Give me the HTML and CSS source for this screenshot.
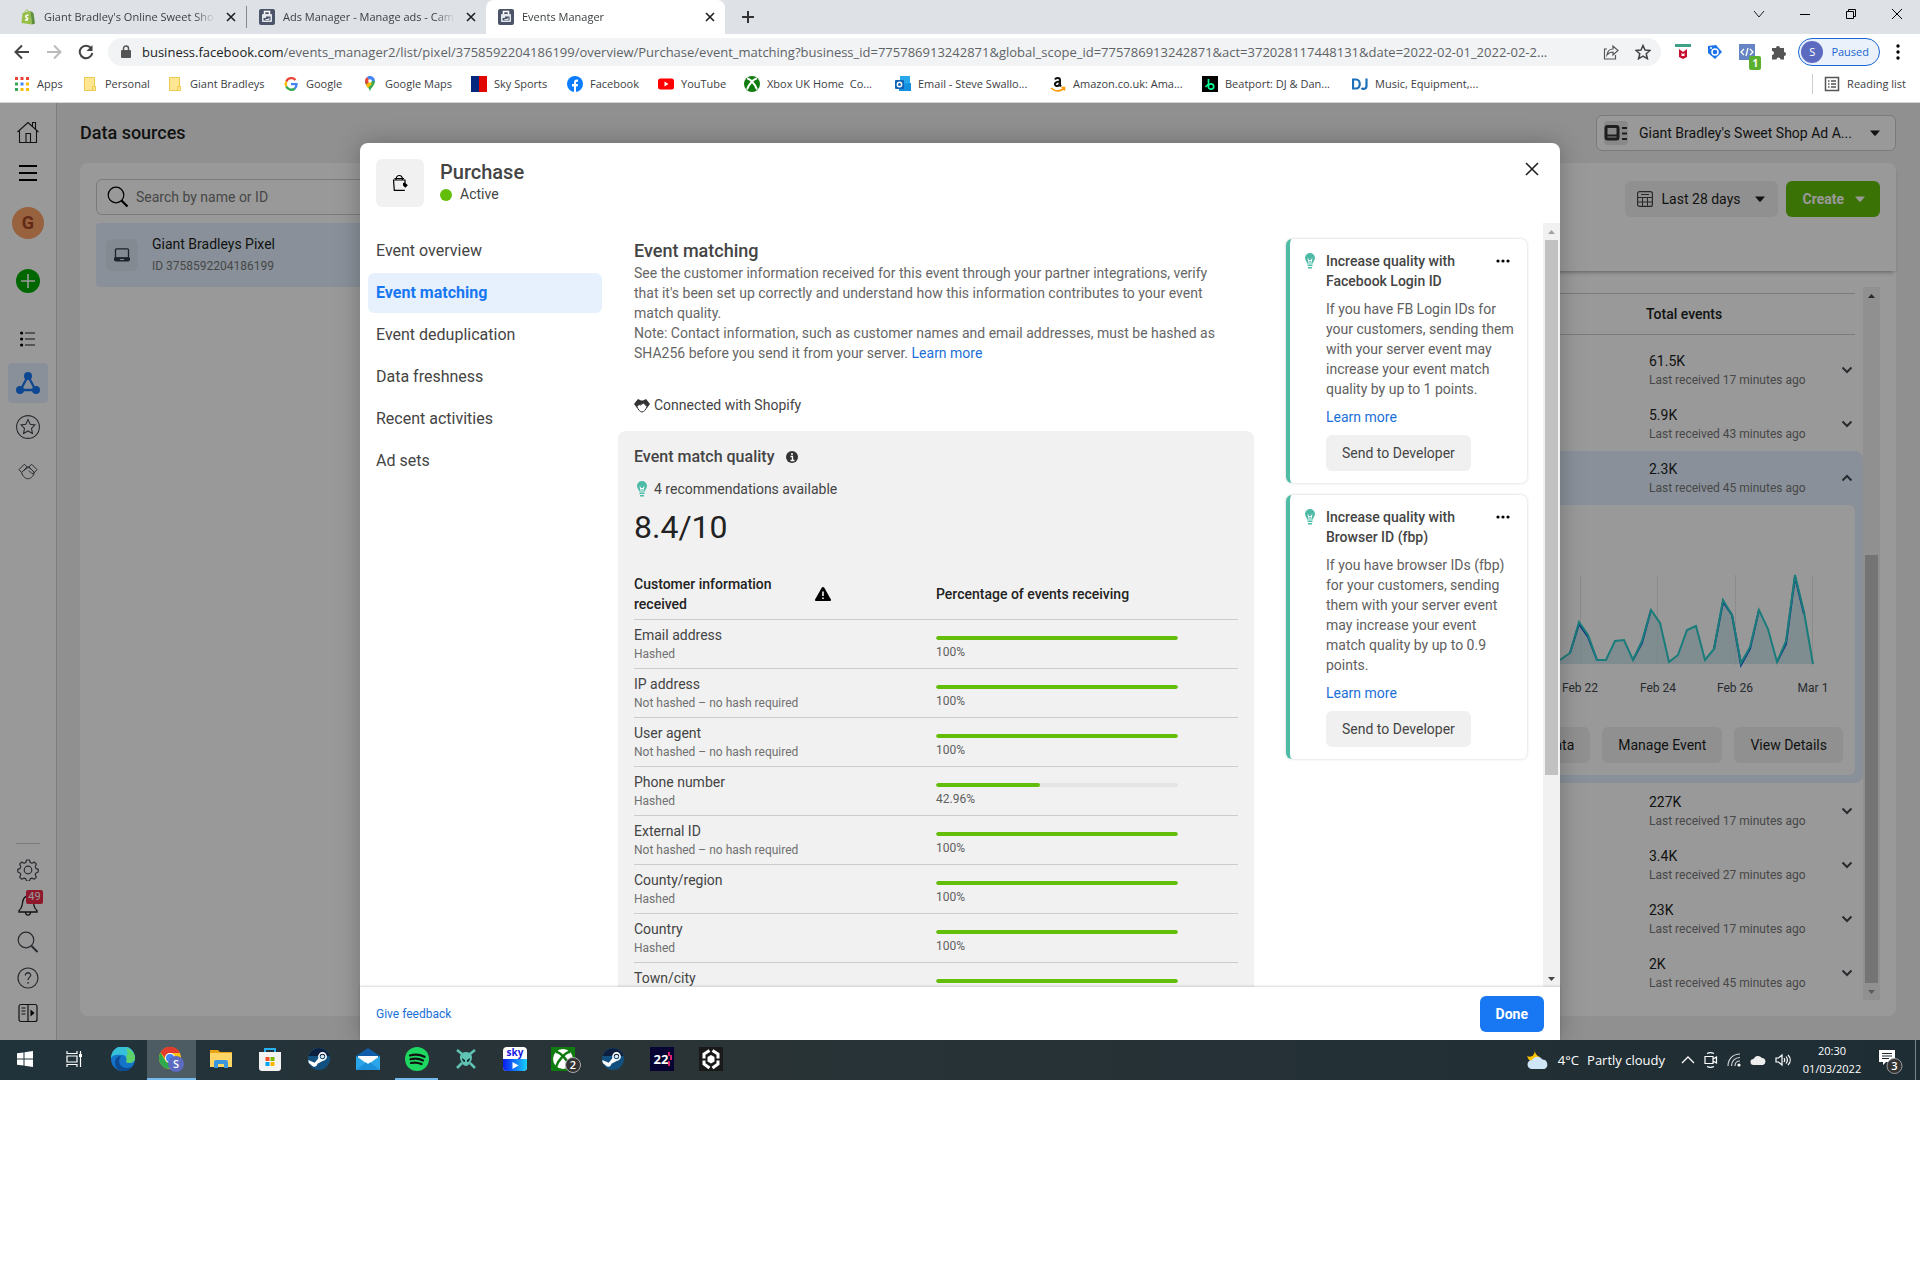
FILE: index.html
```html
<!DOCTYPE html>
<html lang="en">
<head>
    <meta charset="UTF-8">
    <meta name="viewport" content="width=device-width, initial-scale=1.0">
    <title>Events Manager</title>
    <link rel="stylesheet" href="styles.css">
</head>
<body>
    <!-- shared icons -->
    <svg class="sprite" aria-hidden="true">
        <symbol id="i-x" viewBox="0 0 12 12"><path d="M2 2l8 8M10 2l-8 8" stroke="currentColor" stroke-width="1.6" fill="none"/></symbol>
        <symbol id="i-folder" viewBox="0 0 16 16"><path d="M2.5 1.5h10v13h-10z" fill="#ffe693" stroke="#edc94d"/><path d="M10.500 10.500h3v4h-3z" fill="#ffe693" stroke="#edc94d"/></symbol>
        <symbol id="i-case" viewBox="0 0 16 16"><rect width="16" height="16" rx="2" fill="#4b5468"/><path d="M5.500 5V2.500h5V5" fill="none" stroke="#fff" stroke-width="1.500"/><rect x="3" y="5" width="10" height="8" rx="1" fill="#e4e7ec"/><path d="M4.500 11.500V9h2.500V7.500h4.500v4z" fill="#4b5468"/><path d="M6.500 10.500h3.500V8.800" fill="none" stroke="#e4e7ec"/></symbol>
        <symbol id="i-caret" viewBox="0 0 12 8"><path d="M1 1.500h10L6.700 6.500a1 1 0 0 1-1.400 0z" fill="currentColor"/></symbol>
        <symbol id="i-down" viewBox="0 0 12 8"><path d="M1.500 1.500L6 6l4.500-4.500" fill="none" stroke="currentColor" stroke-width="2"/></symbol>
        <symbol id="i-bulb" viewBox="0 0 16 16"><path d="M8 0a5 5 0 0 0-5 5c0 2 1.400 3 2.200 5.500h5.600C11.600 8 13 7 13 5a5 5 0 0 0-5-5z" fill="#4dbba6"/><path d="M6 5.500l1.200 4.500M10 5.500L8.800 10M7 7l1 1 1-1" stroke="#fff" fill="none"/><path d="M5.500 12.300h5M6 14.800h4" stroke="#4dbba6" stroke-width="1.400"/></symbol>
        <symbol id="i-shake" viewBox="0 0 22 18"><path d="M1 7l6-6 3 3-6 6zM21 7l-6-6-3 3 6 6zM10 4h3M4 10c1 5 5 7 7 7s6-2 7-7M7 8c2-3 5-4 7-2l3 3c1 2-1 3-2 2l-3-3" fill="none" stroke="currentColor" stroke-width="1.100" stroke-linejoin="round"/></symbol>
        <symbol id="i-dots" viewBox="0 0 14 4"><circle cx="2" cy="2" r="1.600"/><circle cx="7" cy="2" r="1.600"/><circle cx="12" cy="2" r="1.600"/></symbol>
        <symbol id="i-steam" viewBox="0 0 24 24"><circle cx="12" cy="12" r="11" fill="#12507f"/><path d="M1.500 9A11 11 0 0 1 22.500 9z" fill="#0d1f3f"/><circle cx="15.500" cy="9.500" r="3.600" fill="none" stroke="#fff" stroke-width="1.600"/><circle cx="15.500" cy="9.500" r="1.800" fill="#dfe7ee"/><path d="M1.200 13l6.500 2.800 4.300-5.300 4 3.300-5.500 3a3.300 3.300 0 0 1-6 1.500L1.800 16z" fill="#fff"/></symbol>
    </svg>

    <div class="screen">
        <!-- browser window -->
        <header class="browser">
            <div class="tab-strip">
                <div class="tab">
                    <svg class="tab-icon" viewBox="0 0 16 16"><path d="M2.500 4l8-2 1.500 13.500-10.500-1.500z" fill="#95bf47"/><path d="M10.500 2l3 2L15 14.500 12 15.500z" fill="#5e8e3e"/><path d="M5 4c0-4 4-4 4 0" fill="none" stroke="#95bf47"/><path d="M8.500 6.500C6 5.500 5 8 6.800 8.800 8.500 9.600 7.500 11.800 5 10.800" fill="none" stroke="#fff" stroke-width="1.500"/></svg>
                    <a href="#" class="tab-title">Giant Bradley's Online Sweet Shop</a>
                    <button class="tab-close" aria-label="Close tab"><svg width="12" height="12"><use href="#i-x"/></svg></button>
                </div>
                <div class="tab">
                    <svg class="tab-icon"><use href="#i-case"/></svg>
                    <a href="#" class="tab-title">Ads Manager - Manage ads - Campaigns</a>
                    <button class="tab-close" aria-label="Close tab"><svg width="12" height="12"><use href="#i-x"/></svg></button>
                </div>
                <div class="tab tab-active">
                    <svg class="tab-icon"><use href="#i-case"/></svg>
                    <a href="#" class="tab-title">Events Manager</a>
                    <button class="tab-close" aria-label="Close tab"><svg width="12" height="12"><use href="#i-x"/></svg></button>
                </div>
                <button class="new-tab" aria-label="New tab"><svg width="14" height="14"><path d="M7 1v12M1 7h12" stroke="#333" stroke-width="2"/></svg></button>
                <div class="window-buttons">
                    <button aria-label="Search tabs"><svg width="12" height="12"><path d="M1 3l5 6 5-6" fill="none" stroke="#222"/></svg></button>
                    <button aria-label="Minimise"><svg width="12" height="12"><path d="M1 6.500h10" stroke="#000"/></svg></button>
                    <button aria-label="Restore"><svg width="12" height="12"><path d="M1.500 3.500h7v7h-7zM3.500 3.500v-2h7v7h-2" fill="none" stroke="#000"/></svg></button>
                    <button aria-label="Close"><svg width="12" height="12"><path d="M1 1l10 10M11 1L1 11" stroke="#000"/></svg></button>
                </div>
            </div>

            <div class="toolbar">
                <button class="nav-button" aria-label="Back"><svg width="16" height="16"><path d="M15 8H2M8 1.500L1.500 8 8 14.500" fill="none" stroke="#444" stroke-width="2"/></svg></button>
                <button class="nav-button" aria-label="Forward"><svg width="16" height="16"><path d="M1 8h13M8 1.500L14.500 8 8 14.500" fill="none" stroke="#bbb" stroke-width="2"/></svg></button>
                <button class="nav-button" aria-label="Reload"><svg width="16" height="16"><path d="M13 4a6.300 6.300 0 1 0 1.300 5" fill="none" stroke="#444" stroke-width="2"/><path d="M14.500 1v6h-6z" fill="#444"/></svg></button>
                <div class="address">
                    <svg width="10" height="14"><rect y="5" width="10" height="8" rx="1" fill="#555"/><path d="M2.500 6V3.500a2.500 2.500 0 0 1 5 0V6" fill="none" stroke="#555" stroke-width="1.500"/></svg>
                    <label for="url">business.facebook.com</label>
                    <input type="text" id="url" value="/events_manager2/list/pixel/3758592204186199/overview/Purchase/event_matching?business_id=775786913242871&amp;global_scope_id=775786913242871&amp;act=372028117448131&amp;date=2022-02-01_2022-02-2...">
                    <button aria-label="Share"><svg width="16" height="16"><path d="M4 5H1.500v10h11v-4M4 11c.5-4 3-6 6-6V2l5 4.500-5 4.500V8c-3 0-4.500 1-6 3z" fill="none" stroke="#555" stroke-width="1.200"/></svg></button>
                    <button aria-label="Bookmark"><svg width="16" height="16"><path d="M8 1.500l2 4.600 5 .4-3.800 3.300 1.200 4.900L8 12.100l-4.400 2.600 1.200-4.900L1 6.500l5-.4z" fill="none" stroke="#444" stroke-width="1.500"/></svg></button>
                </div>
                <div class="extensions">
                    <svg width="16" height="16"><path d="M0 0h16v3H0z" fill="#3fa288"/><path d="M4 5l4 3 4-3v8l-4 2-4-2z" fill="#c8102e"/><path d="M6.500 9L8 10l1.500-1v3h-3z" fill="#fff"/></svg>
                    <svg width="16" height="16"><path d="M1 2l8-1 6 7-7 7-7-6z" fill="#1a73e8"/><circle cx="8" cy="8" r="3" fill="none" stroke="#fff" stroke-width="1.500"/><circle cx="4" cy="4" r="1" fill="#fff"/></svg>
                    <span class="ext-code"><svg width="16" height="16"><rect width="16" height="16" fill="#6584c3"/><path d="M5 5L2 8l3 3M11 5l3 3-3 3M9 4l-2 8" fill="none" stroke="#fff" stroke-width="1.300"/></svg><span class="ext-badge">1</span></span>
                    <svg width="16" height="16"><path d="M1 4h4a2 2 0 1 1 4 0h4v4a2 2 0 1 1 0 4v3.500H9.500a2 2 0 1 0-4 0H1V11a2 2 0 1 0 0-4z" fill="#555"/></svg>
                </div>
                <button class="profile"><span>S</span>Paused</button>
                <button class="kebab" aria-label="Menu"><svg width="4" height="16"><circle cx="2" cy="2" r="1.700"/><circle cx="2" cy="8" r="1.700"/><circle cx="2" cy="14" r="1.700"/></svg></button>
            </div>

            <nav class="bookmarks">
                <a href="#"><svg viewBox="0 0 16 16"><path d="M1 1h3v3H1zM6.500 1h3v3h-3zM12 1h3v3h-3z" fill="#ea4335"/><path d="M1 6.500h3v3H1zM1 12h3v3H1z" fill="#34a853"/><path d="M6.500 6.500h3v3h-3z" fill="#4285f4"/><path d="M12 6.500h3v3h-3zM6.500 12h3v3h-3zM12 12h3v3h-3z" fill="#fbbc04"/></svg>Apps</a>
                <a href="#"><svg><use href="#i-folder"/></svg>Personal</a>
                <a href="#"><svg><use href="#i-folder"/></svg>Giant Bradleys</a>
                <a href="#"><svg viewBox="0 0 16 16"><path d="M12.500 4A5.500 5.500 0 0 0 3.300 5.500" fill="none" stroke="#ea4335" stroke-width="2.300"/><path d="M3.300 5.500a5.500 5.500 0 0 0 0 5" fill="none" stroke="#fbbc04" stroke-width="2.300"/><path d="M3.300 10.500a5.500 5.500 0 0 0 8.500 2" fill="none" stroke="#34a853" stroke-width="2.300"/><path d="M11.800 12.500c1.300-1 1.700-2.500 1.700-4.300H8" fill="none" stroke="#4285f4" stroke-width="2.300"/></svg>Google</a>
                <a href="#"><svg viewBox="0 0 16 16"><path d="M8 16C8 12 3 10 3 5l4-1 6 1c0 5-5 7-5 11z" fill="#34a853"/><path d="M3 5a5 5 0 0 1 2-4l3 4-4 4z" fill="#ea4335"/><path d="M5 1a5 5 0 0 1 8 4L8 5z" fill="#4285f4"/><path d="M4 9l4-4 2 3-4 4z" fill="#fbbc04"/><circle cx="8" cy="5" r="1.800" fill="#fff"/></svg>Google Maps</a>
                <a href="#"><svg viewBox="0 0 16 16"><path d="M0 0h8v16H0z" fill="#00277e"/><path d="M8 0h8v16H8z" fill="#e10600"/></svg>Sky Sports</a>
                <a href="#"><svg viewBox="0 0 16 16"><circle cx="8" cy="8" r="8" fill="#0a7cff"/><path d="M7 16v-5.500H5V8h2V6.500C7 4.300 8.300 3.300 11 3.700v2c-1.400 0-2 .1-2 1V8h2l-.4 2.500H9V16z" fill="#fff"/></svg>Facebook</a>
                <a href="#"><svg viewBox="0 0 16 16"><rect y="2.500" width="16" height="11" rx="2.500" fill="#f00"/><path d="M6.500 5.500l4 2.500-4 2.500z" fill="#fff"/></svg>YouTube</a>
                <a href="#"><svg viewBox="0 0 16 16"><circle cx="8" cy="8" r="8" fill="#107c10"/><path d="M3 2.500C5.500 2.500 11.500 8 13 13.500M13 2.500C10.500 2.500 4.500 8 3 13.500" fill="none" stroke="#fff" stroke-width="2"/></svg>Xbox UK Home&nbsp; Co...</a>
                <a href="#"><svg viewBox="0 0 16 16"><path d="M5 0h10v10H5z" fill="#28a8ea"/><path d="M4 8l12-1v8H4z" fill="#1490df"/><rect y="4" width="9" height="9" rx="1" fill="#0f64b5"/><circle cx="4.500" cy="8.500" r="2.200" fill="none" stroke="#fff" stroke-width="1.400"/></svg>Email - Steve Swallo...</a>
                <a href="#"><svg viewBox="0 0 16 16"><path d="M5 3.500c1-2 5-2 5 .5v5l1 1.500M10 5.500c-6 0-6 4-3.500 4.500S10 8 10 5.500" fill="none" stroke="#111" stroke-width="2"/><path d="M1 12c4 3.500 9 3.500 13 .5M11.500 11.500h3v3" fill="none" stroke="#f90" stroke-width="1.600"/></svg>Amazon.co.uk: Ama...</a>
                <a href="#"><svg viewBox="0 0 16 16"><path d="M0 0h16v16H0z" fill="#000"/><circle cx="9" cy="10.500" r="2.700" fill="none" stroke="#01ff95" stroke-width="1.700"/><path d="M6.500 3v5L3.500 11" fill="none" stroke="#01ff95" stroke-width="1.700"/></svg>Beatport: DJ &amp; Dan...</a>
                <a href="#"><svg viewBox="0 0 16 16"><path d="M1 3.500h3c5 0 5 9 0 9H1zM14.500 2.500V10c0 3-3.500 3.500-5 2" fill="none" stroke="#1d6fb8" stroke-width="2.200"/></svg>Music, Equipment,...</a>
                <a href="#" class="reading-list"><svg viewBox="0 0 16 16"><path d="M1.500 1.500h13v13h-13zM4 5h1.500M7 5h5M4 8h1.500M7 8h5M4 11h1.500M7 11h5" fill="none" stroke="#555" stroke-width="1.500"/></svg>Reading list</a>
            </nav>
        </header>

        <div class="app">
            <aside class="sidebar">
                <a href="#" aria-label="Home"><svg width="22" height="22"><path d="M.5 11L11 1.500 21.500 11M2.500 9.500v12h17v-12M15.500 5V1.500h3V8M9 21v-8.500h4.500V21" fill="none" stroke="#1c1e21" stroke-width="1.100"/></svg></a>
                <a href="#" aria-label="Menu"><svg width="18" height="18"><path d="M0 2h18M0 9h18M0 16h18" stroke="#000" stroke-width="2"/></svg></a>
                <a href="#" class="avatar">G</a>
                <a href="#" class="add" aria-label="Add"><svg width="24" height="24"><circle cx="12" cy="12" r="12" fill="#00ab00"/><path d="M12 5v14M5 12h14" stroke="#fff" stroke-width="1.600"/></svg></a>
                <a href="#" class="side-link" aria-label="Overview"><svg width="16" height="16"><path d="M5 2h10M5 8h10M5 14h10" stroke="#1c1e21"/><circle cx="1.600" cy="2" r="1.600"/><circle cx="1.600" cy="8" r="1.600"/><circle cx="1.600" cy="14" r="1.600"/></svg></a>
                <a href="#" class="side-link side-active" aria-label="Data sources"><svg width="24" height="24"><path d="M12 5L4.500 19h15z" fill="none" stroke="#1877f2" stroke-width="2.300"/><circle cx="12" cy="5" r="4" fill="#1877f2"/><circle cx="4" cy="19" r="4" fill="#1877f2"/><circle cx="20" cy="19" r="4" fill="#1877f2"/></svg></a>
                <a href="#" class="side-link" aria-label="Favourites"><svg width="24" height="24"><circle cx="12" cy="12" r="11.400" fill="none" stroke="#444950" stroke-width="1.100"/><path d="M12 4.500l2.200 4.700 4.800.7-3.500 3.500.9 5L12 16l-4.400 2.400.9-5L5 9.900l4.800-.7z" fill="none" stroke="#444950" stroke-width="1.100"/></svg></a>
                <a href="#" class="side-link" aria-label="Partners"><svg width="20" height="17"><use href="#i-shake"/></svg></a>
                <div class="side-bottom">
                    <a href="#" aria-label="Settings"><svg width="22" height="22"><circle cx="11" cy="11" r="3.800" fill="none" stroke="#444950" stroke-width="1.200"/><path d="M9.500 1h3l.6 2.500 1.800.8 2.500-1.200 2 2-1.200 2.500.7 1.800 2.300 1v2.600l-2.300 1-.7 1.800 1.200 2.400-2 2-2.500-1.100-1.800.8-.6 2.100h-3l-.7-2.100-1.700-.8-2.500 1.100-2-2 1.200-2.400-.7-1.800-2.300-1v-2.600l2.300-1 .7-1.800L2.600 5.100l2-2 2.500 1.200 1.700-.8z" fill="none" stroke="#444950" stroke-width="1.200" stroke-linejoin="round"/></svg></a>
                    <a href="#" class="bell" aria-label="Notifications"><svg width="20" height="22"><path d="M10 1C6 1 5 4 4.500 8S3 14 1 15.500V17h18v-1.500C17 14 16 12 15.500 8S14 1 10 1zM7.500 17.500c.5 3.500 4.500 3.500 5 0" fill="none" stroke="#1c1e21" stroke-width="1.300"/></svg><span>49</span></a>
                    <a href="#" aria-label="Search"><svg width="22" height="22"><circle cx="9" cy="9" r="7.800" fill="none" stroke="#444950" stroke-width="1.200"/><path d="M14.500 15l6 6" stroke="#444950" stroke-width="2"/></svg></a>
                    <a href="#" aria-label="Help"><svg width="22" height="22"><circle cx="11" cy="11" r="10" fill="none" stroke="#444950" stroke-width="1.200"/><path d="M8.300 8.500c0-3.800 5.500-3.500 5.400-.2 0 2-2.700 2.200-2.700 4.700" fill="none" stroke="#444950" stroke-width="1.300"/><circle cx="11" cy="15.800" r=".9" fill="#444950"/></svg></a>
                    <a href="#" aria-label="Expand"><svg width="20" height="20"><rect x="1" y="1.500" width="18" height="17" rx="2" fill="none" stroke="#1c1e21" stroke-width="1.200"/><path d="M10 1.500v17M3.500 5h4M3.500 8h4M3.500 11h4" stroke="#1c1e21" stroke-width="1.200"/><path d="M12.500 6.500l4 3.500-4 3.500z"/></svg></a>
                </div>
            </aside>

            <main class="main">
                <div class="main-head">
                    <h1>Data sources</h1>
                    <div class="account">
                        <svg class="account-icon" width="24" height="24"><rect width="24" height="24" rx="4" fill="#e4e4e4"/><rect x="2" y="5.500" width="12" height="12.500" rx="1.500" fill="none" stroke="#333" stroke-width="3"/><path d="M1 14.500h14M18 7h5M18 12.500h5M18 18h5" stroke="#333" stroke-width="2"/></svg>
                        <select aria-label="Ad account">
                            <option>Giant Bradley's Sweet Shop Ad A...</option>
                        </select>
                        <svg width="12" height="8"><use href="#i-caret"/></svg>
                    </div>
                </div>

                <div class="panels">
                    <section class="panel sources">
                        <div class="search">
                            <svg width="22" height="22"><circle cx="9" cy="9" r="7.800" fill="none" stroke="#000" stroke-width="1.200"/><path d="M14.500 14.500l6 6" stroke="#000" stroke-width="2.200"/></svg>
                            <input type="text" placeholder="Search by name or ID" aria-label="Search by name or ID">
                        </div>
                        <a href="#" class="source">
                            <span class="source-icon"><svg width="16" height="14"><rect x="1.500" y=".8" width="13" height="9" rx="1" fill="none" stroke="#333b45" stroke-width="1.300"/><path d="M0 9.500h16v2a2 2 0 0 1-2 2H2a2 2 0 0 1-2-2z" fill="#333b45"/><path d="M6 11.500h4" stroke="#dce9f5"/></svg></span>
                            <span>
                                <span class="source-name">Giant Bradleys Pixel</span>
                                <span class="source-id">ID 3758592204186199</span>
                            </span>
                        </a>
                    </section>

                    <section class="panel events">
                        <div class="events-head">
                            <button class="btn-grey date"><svg width="16" height="16"><rect x=".6" y=".6" width="14.800" height="14.800" rx="2" fill="none" stroke="#444" stroke-width="1.200"/><path d="M4 3.500h8M1 6.500h14M1 11h14M5.500 6.500V15M10.500 6.500V15" stroke="#444" fill="none"/></svg>Last 28 days<svg width="12" height="8"><use href="#i-caret"/></svg></button>
                            <button class="create">Create<svg width="12" height="8"><use href="#i-caret"/></svg></button>
                        </div>
                        <div class="events-scroll">
                            <div class="events-list">
                                <div class="events-title">Total events</div>
                                <div class="event"><div>61.5K<small>Last received 17 minutes ago</small></div><svg width="12" height="8"><use href="#i-down"/></svg></div>
                                <div class="event"><div>5.9K<small>Last received 43 minutes ago</small></div><svg width="12" height="8"><use href="#i-down"/></svg></div>
                                <div class="event-open">
                                    <div class="event"><div>2.3K<small>Last received 45 minutes ago</small></div><svg class="up" width="12" height="8"><use href="#i-down"/></svg></div>
                                    <div class="event-card">
                                        <svg class="chart" width="280" height="126">
                                            <path d="M28.500 1v90M105.500 1v90M183.500 1v90M260.500 1v90" stroke="#e8e8e8"/>
                                            <path d="M8 90V86L18 79 27 48 36 61 45 86H54L63 67 72 66 81 86 90 67 99 36 108 49 117 88 126 81 135 56 144 52 153 86 162 75 171 26 180 41 189 89 198 73 207 36 216 55 225 88 234 67 243 1 252 38 261 90z" fill="#b8dce8" opacity=".6"/>
                                            <path d="M18 79L27 50 36 63 45 86M81 86L90 69 99 36M162 75L171 28 180 41 189 91 198 75 207 36M225 88L234 70 243 3 252 40" fill="none" stroke="#1a5fe0" stroke-width="2"/>
                                            <path d="M8 86L18 79 27 48 36 61 45 86H54L63 67 72 66 81 86 90 67 99 36 108 49 117 88 126 81 135 56 144 52 153 86 162 75 171 26 180 41 189 89 198 73 207 36 216 55 225 88 234 67 243 1 252 38 261 90" fill="none" stroke="#2ccfcb" stroke-width="2"/>
                                            <text x="28" y="118">Feb 22</text><text x="106" y="118">Feb 24</text><text x="183" y="118">Feb 26</text><text x="261" y="118">Mar 1</text>
                                        </svg>
                                        <div class="event-actions">
                                            <button class="btn-grey">View Data</button>
                                            <button class="btn-grey">Manage Event</button>
                                            <button class="btn-grey">View Details</button>
                                        </div>
                                    </div>
                                </div>
                                <div class="event"><div>227K<small>Last received 17 minutes ago</small></div><svg width="12" height="8"><use href="#i-down"/></svg></div>
                                <div class="event"><div>3.4K<small>Last received 27 minutes ago</small></div><svg width="12" height="8"><use href="#i-down"/></svg></div>
                                <div class="event"><div>23K<small>Last received 17 minutes ago</small></div><svg width="12" height="8"><use href="#i-down"/></svg></div>
                                <div class="event"><div>2K<small>Last received 45 minutes ago</small></div><svg width="12" height="8"><use href="#i-down"/></svg></div>
                            </div>
                            <div class="scrollbar scrolled">
                                <svg width="17" height="17"><path d="M5 11h7L8.500 7z" fill="#444"/></svg>
                                <div class="thumb"></div>
                                <svg width="17" height="17"><path d="M5 7h7l-3.500 4z" fill="#999"/></svg>
                            </div>
                        </div>
                    </section>
                </div>
            </main>

            <div class="overlay">
                <div class="modal">
                    <div class="modal-header">
                        <span class="modal-icon"><svg width="16" height="18"><path d="M1 6h12.500M1.500 6l.8 10.300h10.500M13 6v3M4 6C4 0 10.500 0 10.500 6M2.500 4.500h9.500" fill="none" stroke="#000" stroke-width="1.200"/><path d="M11 9l2-.5 2.800 2.800-2.500 2.500L11 11.500z"/></svg></span>
                        <div>
                            <h2>Purchase</h2>
                            <div class="status">Active</div>
                        </div>
                        <button class="modal-close" aria-label="Close"><svg width="16" height="16"><path d="M2 2l12 12M14 2L2 14" stroke="#222" stroke-width="1.600"/></svg></button>
                    </div>

                    <div class="modal-body">
                        <nav class="modal-nav">
                            <a href="#">Event overview</a>
                            <a href="#" class="selected">Event matching</a>
                            <a href="#">Event deduplication</a>
                            <a href="#">Data freshness</a>
                            <a href="#">Recent activities</a>
                            <a href="#">Ad sets</a>
                        </nav>

                        <div class="matching">
                            <div class="intro">
                                <h3>Event matching</h3>
                                <p>See the customer information received for this event through your partner integrations, verify that it's been set up correctly and understand how this information contributes to your event match quality.<br>Note: Contact information, such as customer names and email addresses, must be hashed as SHA256 before you send it from your server. <a href="#">Learn more</a></p>
                                <div class="connected"><svg viewBox="0 0 16 16" width="16" height="16"><path d="M0 7l4-5 3 1.500h2L12 2l4 5-3 4-1-1-4-3.500L5 9l-2 2z" fill="#333"/><path d="M3 9.500C4 13 6.500 15 8 15s4-2 5-5.500L9.500 6 6.500 8 5 7.500z" fill="#fff" stroke="#333"/></svg>Connected with Shopify</div>
                            </div>
                            <section class="quality">
                                <h4>Event match quality <svg width="12" height="12"><circle cx="6" cy="6" r="6" fill="#333"/><path d="M4.500 5.500H6.500V9.500M4.500 9.500h4" stroke="#fff" stroke-width="1.300" fill="none"/><circle cx="6" cy="3" r="1" fill="#fff"/></svg></h4>
                                <div class="recommend"><svg width="16" height="16"><use href="#i-bulb"/></svg>4 recommendations available</div>
                                <div class="score">8.4/10</div>
                                <table>
                                    <thead>
                                        <tr>
                                            <th><div class="th-info"><span>Customer information received</span><svg width="16" height="14"><path d="M8 0c.6 0 1 .3 1.300.8l6.500 11.400c.5.900 0 1.800-1 1.800H1.200c-1 0-1.500-.9-1-1.800L6.700.8C7 .3 7.400 0 8 0z"/><path d="M8 4.500v4.500M8 10.500v1.500" stroke="#fff" stroke-width="1.500"/></svg></div></th>
                                            <th>Percentage of events receiving</th>
                                        </tr>
                                    </thead>
                                    <tbody>
                                        <tr><td>Email address<small>Hashed</small></td><td><div class="bar"><div style="width: 100%"></div></div>100%</td></tr>
                                        <tr><td>IP address<small>Not hashed – no hash required</small></td><td><div class="bar"><div style="width: 100%"></div></div>100%</td></tr>
                                        <tr><td>User agent<small>Not hashed – no hash required</small></td><td><div class="bar"><div style="width: 100%"></div></div>100%</td></tr>
                                        <tr><td>Phone number<small>Hashed</small></td><td><div class="bar"><div style="width: 42.96%"></div></div>42.96%</td></tr>
                                        <tr><td>External ID<small>Not hashed – no hash required</small></td><td><div class="bar"><div style="width: 100%"></div></div>100%</td></tr>
                                        <tr><td>County/region<small>Hashed</small></td><td><div class="bar"><div style="width: 100%"></div></div>100%</td></tr>
                                        <tr><td>Country<small>Hashed</small></td><td><div class="bar"><div style="width: 100%"></div></div>100%</td></tr>
                                        <tr><td>Town/city</td><td><div class="bar"><div style="width: 100%"></div></div></td></tr>
                                    </tbody>
                                </table>
                            </section>
                        </div>

                        <div class="tips">
                            <article class="tip">
                                <svg width="16" height="16"><use href="#i-bulb"/></svg>
                                <div>
                                    <div class="tip-head"><h5>Increase quality with Facebook Login ID</h5><button aria-label="More"><svg width="14" height="4"><use href="#i-dots"/></svg></button></div>
                                    <p>If you have FB Login IDs for your customers, sending them with your server event may increase your event match quality by up to 1 points.</p>
                                    <a href="#">Learn more</a>
                                    <button class="btn-grey">Send to Developer</button>
                                </div>
                            </article>
                            <article class="tip">
                                <svg width="16" height="16"><use href="#i-bulb"/></svg>
                                <div>
                                    <div class="tip-head"><h5>Increase quality with Browser ID (fbp)</h5><button aria-label="More"><svg width="14" height="4"><use href="#i-dots"/></svg></button></div>
                                    <p>If you have browser IDs (fbp) for your customers, sending them with your server event may increase your event match quality by up to 0.9 points.</p>
                                    <a href="#">Learn more</a>
                                    <button class="btn-grey">Send to Developer</button>
                                </div>
                            </article>
                        </div>

                        <div class="scrollbar">
                            <svg width="17" height="17"><path d="M5 11h7L8.500 7z" fill="#a3a3a3"/></svg>
                            <div class="thumb"></div>
                            <svg width="17" height="17"><path d="M5 7h7l-3.500 4z" fill="#444"/></svg>
                        </div>
                    </div>

                    <div class="modal-footer">
                        <a href="#">Give feedback</a>
                        <button class="done">Done</button>
                    </div>
                </div>
            </div>
        </div>

        <!-- windows taskbar -->
        <footer class="taskbar">
            <div class="task-apps">
                <button aria-label="Start"><svg width="16" height="16"><path d="M0 2.300l6.500-.9v6.100H0zM7.500 1.200L16 0v7.500H7.500zM0 8.500h6.500v6.100L0 13.700zM7.500 8.500H16V16l-8.500-1.200z" fill="#fff"/></svg></button>
                <button aria-label="Task view"><svg width="16" height="16"><path d="M1 0v2.500h10V0M1 16v-2.500h10V16M1 5h10v6H1zM14.500 0v16" fill="none" stroke="#fff" stroke-width="1.200"/><path d="M13 3h3v3h-3z" fill="#fff"/></svg></button>
                <button aria-label="Edge"><svg width="24" height="24"><circle cx="12" cy="12" r="12" fill="#1474c9"/><path d="M0 11A12 12 0 0 1 24 11c0 5-6 6-9 4 2-3 0-7-4-7C6 7 1 8 0 11z" fill="#35c1d8"/><path d="M15 1c6 2 9 6 9 10 0 5-6 6-9 4 1-2 1-4 0-5 2-2 2-6 0-9z" fill="#5fd36a"/><path d="M10 9c-4 5-1 12 6 12 3 0 5-1 6-3-3 8-17 8-18-1-.4-4 2-8 6-8z" fill="#0d4b94"/></svg></button>
                <button class="current" aria-label="Chrome"><svg width="28" height="28"><circle cx="12" cy="13" r="11" fill="#fbc116"/><path d="M2.500 7.500A11 11 0 0 1 22 8H12a5 5 0 0 0-5 5z" fill="#e33b2e"/><path d="M2.500 7.500L7.500 16a5 5 0 0 0 5 2l-2 6A11 11 0 0 1 2.500 7.500z" fill="#2da94f"/><circle cx="12" cy="13" r="5" fill="#fff"/><circle cx="12" cy="13" r="4" fill="#4285f4"/><circle cx="18" cy="19" r="8" fill="#5c6bc0"/><text x="18" y="23">S</text></svg></button>
                <button aria-label="File Explorer"><svg width="22" height="20"><path d="M0 1h8l2 2h12v15H0z" fill="#e8a317"/><path d="M0 4h22v14H0z" fill="#ffd566"/><path d="M4 19v-6a2 2 0 0 1 2-2h10a2 2 0 0 1 2 2v6h-4v-4H8v4z" fill="#3b97dd"/></svg></button>
                <button aria-label="Store"><svg width="24" height="24"><path d="M7 6V2h10v4" fill="none" stroke="#29b0f0" stroke-width="2"/><path d="M1 5h22v16a3 3 0 0 1-3 3H4a3 3 0 0 1-3-3z" fill="#f3f3f3"/><path d="M7.500 10H11.500v4h-4z" fill="#f25022"/><path d="M12.500 10h4v4h-4z" fill="#7fba00"/><path d="M7.500 15h4v4h-4z" fill="#00a4ef"/><path d="M12.500 15h4v4h-4z" fill="#ffb900"/></svg></button>
                <button aria-label="Steam"><svg width="24" height="24"><use href="#i-steam"/></svg></button>
                <button aria-label="Mail"><svg width="24" height="24"><path d="M0 9l12-8 12 8v14H0z" fill="#0f5ca8"/><path d="M2 9h20v10H2z" fill="#f2f2f2"/><path d="M0 9l12 8.500L24 9v14H0z" fill="#2ba5ea"/><path d="M0 23L12 14 24 23z" fill="#1b8fda"/><path d="M3 9l9 8 9-8z" fill="#fff"/></svg></button>
                <button class="running" aria-label="Spotify"><svg width="24" height="24"><circle cx="12" cy="12" r="12" fill="#1ed760"/><path d="M5 8.500c5-1.500 10-1 14.500 1.300M5.500 12.300c4.500-1.200 8.500-.8 12.500 1.200M6 16c4-1 7-.5 10.500 1" fill="none" stroke="#111" stroke-width="2.200" stroke-linecap="round"/></svg></button>
                <button aria-label="Alienware"><svg width="22" height="20"><path d="M2 1l5 4M20 1l-5 4M2 19l5-5M20 19l-5-5" stroke="#5fc4b4" stroke-width="2.500"/><path d="M11 3c5 0 7 4 5.500 8-1 3-3.500 6-5.500 6s-4.500-3-5.500-6C4 7 6 3 11 3z" fill="#5fc4b4"/><path d="M7 9l3 2v2c-2 0-3-2-3-4zM15 9l-3 2v2c2 0 3-2 3-4z" fill="#172a30"/></svg></button>
                <button aria-label="Sky Go"><svg width="24" height="24"><defs><linearGradient id="sky" x2="1" y2="0"><stop stop-color="#0a1cf0"/><stop offset="1" stop-color="#18d0ff"/></linearGradient></defs><rect width="24" height="24" rx="4" fill="#fff"/><path d="M0 12h24v8a4 4 0 0 1-4 4H4a4 4 0 0 1-4-4z" fill="url(#sky)"/><path d="M9.500 15l6 3.500-6 3.500z" fill="#fff"/><text class="sky-text" x="12" y="9">sky</text></svg></button>
                <button aria-label="Xbox"><svg width="34" height="28"><rect x="4" y="2" width="24" height="24" fill="#107c10"/><circle cx="16" cy="14" r="10" fill="#fff"/><path d="M9 7c4 0 12 8 14 15M23 7c-4 0-12 8-14 15" fill="none" stroke="#107c10" stroke-width="2.600"/><circle cx="26" cy="20" r="7.500" fill="#333" stroke="#aaa"/><text x="26" y="24">2</text></svg></button>
                <button aria-label="Steam"><svg width="24" height="24"><use href="#i-steam"/></svg></button>
                <button aria-label="FIFA 22"><svg width="24" height="24"><path d="M0 0h24v24H0z" fill="#070332"/><path d="M19 5v4M21 8v5M19 14v5" stroke="#e0206a" stroke-width="2"/><text class="fifa-text" x="11" y="17">22</text></svg></button>
                <button aria-label="Cube"><svg width="24" height="24"><path d="M0 0h24v24H0z" fill="#191919"/><path d="M10.500 3.500L5 7v4.500M13.500 3.500L19 7v4.500M5 13.500V17l5.500 4M19 13.500V17l-5.500 4" fill="none" stroke="#fff" stroke-width="3"/><path d="M12 8l3.500 2v4.500L12 16.500l-3.500-2V10z" fill="#fff"/></svg></button>
            </div>
            <div class="tray">
                <button class="weather"><svg width="24" height="22"><path d="M9 0a7 7 0 0 0 5 8l-5 5-6-2-2-4C5 9 9 7 9 0z" fill="#fdc500"/><path d="M6 20a4.500 4.500 0 0 1 0-9 6 6 0 0 1 10.500-.5 5 5 0 0 1 2 9.500z" fill="#cfe6f7"/></svg><span>4°C</span><span>Partly cloudy</span></button>
                <button aria-label="Hidden icons"><svg width="14" height="14"><path d="M1 10l6-6 6 6" fill="none" stroke="#fff" stroke-width="1.300"/></svg></button>
                <button aria-label="Meet now"><svg width="14" height="16"><path d="M1 4.500h8v7H1zM9 7l3.500-2v6L9 9M3 1.500c2-1 5-1 7 0M3 14.500c2 1 5 1 7 0" fill="none" stroke="#fff" stroke-width="1.200"/></svg></button>
                <button aria-label="Network"><svg width="14" height="14"><path d="M1 13C1 6 6 1 13 1M4.500 13C4.500 8 8 4.500 13 4.500M8 13c0-3 2-5 5-5" fill="none" stroke="#cfd4d6" stroke-width="1.200"/><circle cx="12" cy="12" r="1.600" fill="#fff"/></svg></button>
                <button aria-label="OneDrive"><svg width="16" height="12"><path d="M3.500 11a3 3 0 0 1 0-6A5 5 0 0 1 12 4a3.600 3.600 0 0 1 1 7z" fill="#eee"/></svg></button>
                <button aria-label="Volume"><svg width="16" height="14"><path d="M1 5h2.500L7 2v10L3.500 9H1zM9 5c1 1.500 1 2.500 0 4M11 3.500c2 2.500 2 4.500 0 7M13 2c3 3 3 7 0 10" fill="none" stroke="#fff" stroke-width="1.200"/></svg></button>
                <button class="clock">20:30<br>01/03/2022</button>
                <button class="notices" aria-label="Notifications"><svg width="28" height="28"><path d="M2 4h16v12H9l-3 3v-3H2z" fill="#fff"/><path d="M5 7.500h10M5 10h10M5 12.500h7" stroke="#1d2a30"/><circle cx="17.500" cy="20" r="7.500" fill="#333" stroke="#999"/><text x="17.500" y="24">3</text></svg></button>
            </div>
        </footer>
    </div>
</body>
</html>
```

FILE: styles.css
```css
* {
    box-sizing: border-box;
}

body {
    margin: 0;
    background-color: #fff;
    color: #1c1e21;
    font-family: Roboto, Arial, sans-serif;
    font-size: 14px;
    line-height: 20px;
}

h1, h2, h3, h4, h5, p {
    margin: 0;
    font-weight: 500;
}

a {
    color: inherit;
    text-decoration: none;
}

button {
    display: flex;
    align-items: center;
    justify-content: center;
    padding: 0;
    border: none;
    background: none;
    color: inherit;
    font: inherit;
    cursor: pointer;
}

input, select {
    min-width: 0;
    padding: 0;
    border: none;
    outline: none;
    background: none;
    color: inherit;
    font: inherit;
}

svg {
    flex: none;
    display: block;
}

small {
    display: block;
    font-size: 12px;
    line-height: 18px;
}

.sprite {
    display: none;
}

.screen {
    display: flex;
    flex-direction: column;
    height: calc(100vh - 202px);
}

/* browser */
.browser {
    flex: none;
    border-bottom: 1px solid #d5d5d5;
    font-family: "Open Sans", "Noto Sans", sans-serif;
    font-size: 11px;
}

.tab-strip {
    display: flex;
    height: 34px;
    padding-left: 8px;
    background-color: #dee1e6;
}

.tab {
    display: flex;
    align-items: center;
    width: 239px;
    padding: 0 9px 0 12px;
}

.tab:first-child {
    border-right: 1px solid #888;
    border-image: linear-gradient(transparent 20%, #888 20%, #888 80%, transparent 80%) 1;
}

.tab-active {
    background-color: #fff;
    border-radius: 8px 8px 0 0;
}

.tab-icon {
    width: 16px;
    height: 16px;
}

.tab-title {
    flex: 1;
    margin: 0 10px 0 8px;
    overflow: hidden;
    white-space: nowrap;
    color: #3c4043;
    mask-image: linear-gradient(to right, #000 88%, transparent);
}

.new-tab {
    width: 46px;
}

.window-buttons {
    display: flex;
    align-items: flex-start;
    margin-left: auto;
}

.window-buttons button {
    width: 46px;
    height: 28px;
}

.toolbar {
    display: flex;
    align-items: center;
    height: 32px;
    padding: 4px 14px 0 6px;
}

.nav-button {
    width: 32px;
}

.address {
    flex: 1;
    display: flex;
    align-items: center;
    height: 28px;
    margin: 0 14px 0 6px;
    padding: 0 10px 0 13px;
    border-radius: 14px;
    background-color: #f1f3f4;
    font-size: 13px;
}

.address label {
    margin-left: 11px;
    color: #202124;
}

.address input {
    flex: 1;
    color: #5f6368;
    text-overflow: ellipsis;
}

.address button {
    margin-left: 16px;
}

.extensions {
    display: flex;
    gap: 16px;
    margin-right: 11px;
}

.ext-code {
    position: relative;
}

.ext-badge {
    position: absolute;
    top: 12px;
    left: 10px;
    width: 12px;
    border-radius: 2px;
    background-color: #5bb030;
    color: #fff;
    font-size: 10px;
    font-weight: bold;
    line-height: 14px;
    text-align: center;
}

.profile {
    gap: 8px;
    height: 28px;
    padding: 0 10px 0 2px;
    border: 1px solid #1967d2;
    border-radius: 14px;
    background-color: #eaf1fb;
    color: #1967d2;
    font-size: 11px;
}

.profile span {
    width: 22px;
    border-radius: 50%;
    background-color: #5c6bc0;
    color: #fff;
    line-height: 22px;
}

.kebab {
    width: 16px;
    margin-left: 10px;
}

.bookmarks {
    display: grid;
    grid-template-columns: 68px 85px 116px 79px 109px 96px 91px 86px 151px 155px 152px 150px 1fr auto;
    align-items: center;
    height: 36px;
    padding: 0 14px;
    color: #3c4043;
}

.bookmarks a {
    display: flex;
    align-items: center;
    gap: 7px;
    white-space: nowrap;
}

.bookmarks svg {
    width: 16px;
    height: 16px;
}

.bookmarks .reading-list {
    padding-left: 11px;
    border-left: 1px solid #ccc;
}

/* events manager */
.app {
    flex: 1;
    position: relative;
    display: flex;
    min-height: 0;
    background-color: #f0f0f0;
}

.sidebar {
    display: flex;
    flex-direction: column;
    align-items: center;
    width: 57px;
    padding: 18px 0 17px;
    border-right: 1px solid #d0d0d0;
    background-color: #fff;
    color: #444950;
}

.sidebar > a {
    display: flex;
    align-items: center;
    justify-content: center;
    width: 40px;
    margin-bottom: 21px;
}

.sidebar .avatar {
    width: 32px;
    margin: 4px 0 30px;
    border-radius: 50%;
    background-color: #fda369;
    color: #a6472a;
    font-size: 18px;
    font-weight: bold;
    line-height: 32px;
}

.sidebar .add {
    margin-bottom: 26px;
}

.sidebar .side-link {
    height: 40px;
    margin-bottom: 4px;
    border-radius: 4px;
}

.side-active {
    background-color: #e4f1ff;
}

.side-bottom {
    display: flex;
    flex-direction: column;
    align-items: center;
    gap: 14px;
    margin-top: auto;
    padding-top: 15px;
    border-top: 1px solid #ccc;
}

.side-bottom a {
    display: flex;
    justify-content: center;
    width: 24px;
}

.bell {
    position: relative;
}

.bell span {
    position: absolute;
    top: -5px;
    left: 10px;
    width: 17px;
    border-radius: 2px;
    background-color: #f02849;
    color: #fff;
    font-size: 11px;
    line-height: 14px;
    text-align: center;
}

.main {
    flex: 1;
    display: flex;
    flex-direction: column;
    min-width: 0;
    padding: 12px 24px 24px 23px;
}

.main-head {
    display: flex;
    align-items: center;
    justify-content: space-between;
    margin-bottom: 12px;
}

.main-head h1 {
    font-size: 18px;
}

.account {
    display: flex;
    align-items: center;
    width: 300px;
    height: 36px;
    padding: 0 14px 0 7px;
    border: 1px solid #ccc;
    border-radius: 6px;
    background-color: #fff;
}

.account select {
    flex: 1;
    margin-left: 11px;
    appearance: none;
}

.panels {
    flex: 1;
    display: flex;
    min-height: 0;
}

.panel {
    border-radius: 8px;
    background-color: #fff;
}

.sources {
    width: 420px;
    padding: 16px;
}

.search {
    display: flex;
    align-items: center;
    gap: 7px;
    height: 36px;
    padding-left: 10px;
    border: 1px solid #ccc;
    border-radius: 6px;
}

.search input {
    flex: 1;
}

.search input::placeholder {
    color: #777;
}

.source {
    display: flex;
    align-items: center;
    gap: 14px;
    height: 64px;
    margin-top: 8px;
    padding-left: 10px;
    border-radius: 4px;
    background-color: #e4f1ff;
}

.source-icon {
    display: flex;
    align-items: center;
    justify-content: center;
    width: 32px;
    height: 32px;
    border-radius: 6px;
    background-color: #dbe6f2;
}

.source-name, .source-id {
    display: block;
    line-height: 22px;
}

.source-id {
    color: #777;
    font-size: 12px;
}

.events {
    flex: 1;
    display: flex;
    flex-direction: column;
    min-height: 0;
    margin-left: 24px;
}

.events-head {
    display: flex;
    justify-content: flex-end;
    gap: 8px;
    height: 108px;
    padding: 18px 16px 0;
    border-radius: 8px 8px 0 0;
    box-shadow: 0 3px 4px -2px rgba(0, 0, 0, 0.4);
}

.btn-grey {
    height: 36px;
    padding: 0 16px;
    border-radius: 6px;
    background-color: #f0f0f0;
}

.date {
    gap: 9px;
    padding: 0 12px;
}

.date svg:last-child {
    margin-left: 5px;
}

.create {
    gap: 10px;
    height: 36px;
    padding: 0 14px 0 16px;
    border-radius: 6px;
    background-color: #63be09;
    color: #fff;
    font-weight: bold;
}

.events-scroll {
    flex: 1;
    display: flex;
    min-height: 0;
    margin: 16px 16px 16px 0;
}

.events-list {
    flex: 1;
    padding-top: 6px;
    overflow: hidden;
}

.events-title {
    margin: 0 8px 8px 0;
    padding: 10px 0 10px calc(100% - 217px);
    border-top: 1px solid #ccc;
    border-bottom: 1px solid #ccc;
    font-weight: 500;
}

.event {
    display: flex;
    align-items: center;
    justify-content: space-between;
    padding: 8px 10px 8px calc(100% - 214px);
}

.event small {
    color: #777;
}

.event svg {
    color: #444950;
}

.event .up {
    transform: rotate(180deg);
}

.event-open {
    margin-bottom: 1px;
    padding-bottom: 8px;
    border-radius: 8px;
    background-color: #e4f1ff;
}

.event-card {
    display: flex;
    flex-direction: column;
    align-items: flex-end;
    height: 270px;
    margin-right: 8px;
    padding: 69px 12px 12px;
    border-radius: 6px;
    background-color: #fff;
}

.chart {
    margin-right: 11px;
}

.chart text {
    fill: #444950;
    font-size: 12px;
    text-anchor: middle;
}

.event-actions {
    display: flex;
    gap: 12px;
    margin-top: auto;
}

.scrollbar {
    flex: none;
    display: flex;
    flex-direction: column;
    width: 17px;
    background-color: #f1f1f1;
}

.scrollbar svg:last-child {
    margin-top: auto;
}

.thumb {
    height: 70%;
    margin: 0 2px;
    background-color: #c1c1c1;
}

.scrolled .thumb {
    height: 60%;
    margin-top: auto;
}

.scrolled svg:last-child {
    margin-top: 0;
}

/* modal */
.overlay {
    position: absolute;
    inset: 0;
    display: flex;
    justify-content: center;
    padding-top: 40px;
    overflow: hidden;
    background-color: rgba(0, 0, 0, 0.4);
}

.modal {
    display: flex;
    flex-direction: column;
    width: 1200px;
    max-width: 90%;
    border-radius: 8px 8px 0 0;
    background-color: #fff;
    box-shadow: 0 0 24px rgba(0, 0, 0, 0.25);
    color: #444;
}

.modal-header {
    flex: none;
    display: flex;
    gap: 16px;
    height: 80px;
    padding: 16px 20px 16px 16px;
}

.modal-icon {
    display: flex;
    align-items: center;
    justify-content: center;
    width: 48px;
    height: 48px;
    border-radius: 6px;
    background-color: #f1f1f1;
    color: #000;
}

.modal-header h2 {
    padding-top: 1px;
    font-size: 20px;
    line-height: 24px;
}

.status::before {
    content: "";
    display: inline-block;
    width: 12px;
    height: 12px;
    margin-right: 8px;
    border-radius: 50%;
    background-color: #63be09;
    vertical-align: -2px;
}

.modal-close {
    width: 16px;
    height: 20px;
    margin-left: auto;
}

.modal-body {
    flex: 1;
    display: flex;
    min-height: 0;
    overflow: hidden;
}

.modal-body a {
    color: #1b6fd8;
}

.modal-nav {
    display: flex;
    flex-direction: column;
    gap: 2px;
    width: 234px;
    margin: 8px 16px 0 8px;
}

.modal-body .modal-nav a {
    padding: 10px 8px;
    border-radius: 6px;
    color: #444;
    font-size: 16px;
}

.modal-body .modal-nav .selected {
    background-color: #e7f1fd;
    color: #1877f2;
    font-weight: bold;
}

.matching {
    flex: 1;
    padding-top: 16px;
}

.intro {
    padding: 0 32px 16px 16px;
}

.intro h3 {
    font-size: 18px;
    line-height: 24px;
}

.intro p {
    color: #666;
    font-weight: normal;
}

.connected, .recommend {
    display: flex;
    align-items: center;
    gap: 4px;
}

.connected {
    margin-top: 32px;
}

.quality {
    padding: 16px;
    border-radius: 8px;
    background-color: #f1f1f1;
}

.quality h4 {
    display: flex;
    align-items: center;
    gap: 12px;
    font-size: 16px;
}

.recommend {
    margin: 12px 0 8px;
}

.score {
    color: #222;
    font-size: 32px;
    line-height: 40px;
}

.quality table {
    width: 100%;
    table-layout: fixed;
    border-collapse: separate;
    border-spacing: 0;
}

.quality th {
    padding: 27px 0 5px;
    border-bottom: 1px solid #ccc;
    color: #222;
    font-weight: 500;
    text-align: left;
}

.th-info {
    display: flex;
    align-items: center;
}

.th-info span {
    width: 60%;
}

.quality td {
    height: 49px;
    padding: 5px 0;
    border-bottom: 1px solid #ccc;
    vertical-align: top;
}

.quality td small {
    color: #707070;
}

.quality td + td {
    padding: 16px 0 0;
    color: #606060;
    font-size: 12px;
    line-height: 16px;
}

.bar {
    width: 80%;
    height: 4px;
    margin-bottom: 4px;
    overflow: hidden;
    border-radius: 2px;
    background-color: #e4e4e4;
}

.bar div {
    height: 100%;
    border-radius: 2px;
    background-color: #63be09;
}

.tips {
    display: flex;
    flex-direction: column;
    gap: 12px;
    width: 241px;
    margin: 16px 16px 0 32px;
}

.tip {
    display: flex;
    gap: 8px;
    padding: 12px;
    border-left: 4px solid #4dbba6;
    border-radius: 6px;
    box-shadow: 0 0 3px rgba(0, 0, 0, 0.2);
}

.tip > svg {
    margin-top: 2px;
}

.tip-head {
    display: flex;
    justify-content: space-between;
    padding-right: 5px;
}

.tip h5 {
    width: 140px;
    font-size: 14px;
}

.tip-head button {
    height: 20px;
    color: #222;
}

.tip p {
    margin: 8px 0;
    color: #606060;
    font-weight: normal;
}

.tip a {
    display: block;
    margin-bottom: 8px;
}

.modal-footer {
    flex: none;
    display: flex;
    align-items: center;
    justify-content: space-between;
    height: 53px;
    padding: 0 16px;
    box-shadow: 0 -1px 2px rgba(0, 0, 0, 0.15);
    color: #1b6fd8;
    font-size: 12px;
}

.done {
    height: 36px;
    padding: 0 16px;
    border-radius: 6px;
    background-color: #1877f2;
    color: #fff;
    font-size: 14px;
    font-weight: bold;
}

/* taskbar */
.taskbar {
    flex: none;
    display: flex;
    justify-content: space-between;
    height: 40px;
    background: linear-gradient(to right, #20323a, #2a3437 35%, #1e2d34);
    color: #fff;
    font-family: "Open Sans", "Noto Sans", sans-serif;
}

.task-apps {
    display: flex;
}

.task-apps button {
    width: 49px;
    border-bottom: 2px solid transparent;
}

.task-apps .current {
    border-color: #76b9ed;
    background-color: #4d5b62;
}

.task-apps .running {
    border-image: linear-gradient(to right, transparent 10%, #76b9ed 10%, #76b9ed 90%, transparent 90%) 2;
}

.taskbar text {
    fill: #fff;
    font-size: 11px;
    font-weight: 600;
    text-anchor: middle;
}

.taskbar .sky-text {
    fill: #1a1ae0;
    font-size: 10px;
    font-weight: bold;
}

.taskbar .fifa-text {
    font-size: 13px;
    font-weight: bold;
}

.tray {
    display: flex;
    align-items: center;
    gap: 9px;
    margin-right: 4px;
    padding-right: 10px;
    border-right: 1px solid #7a8488;
}

.weather {
    gap: 8px;
    margin-right: 7px;
    font-size: 13px;
}

.clock {
    width: 64px;
    font-size: 11px;
    line-height: 18px;
}

.notices {
    margin-left: 4px;
}
```
